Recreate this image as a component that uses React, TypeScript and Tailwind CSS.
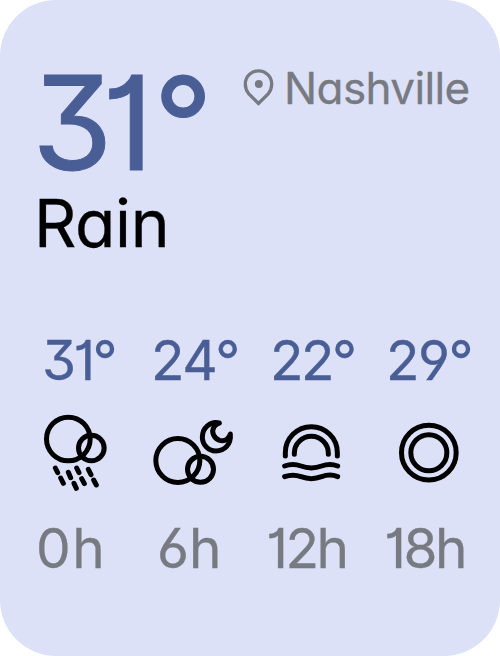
import React from "react";

const face =
  "font-['Inter','Liberation_Sans',sans-serif] font-normal [-webkit-text-stroke:0.3px_currentColor] [font-feature-settings:'cv11','cv09','cv01','cv03','cv04','kern'] whitespace-nowrap leading-none";

function RainIcon() {
  return (
    <svg viewBox="0 0 270 285" className="h-[95px] w-[90px]" fill="none" stroke="black" strokeLinecap="round">
      <g strokeWidth="15">
        <circle cx="100" cy="102" r="65.5" />
        <circle cx="169" cy="129" r="38.5" />
      </g>
      <path
        strokeWidth="15"
        d="M61 189l7 14M100 202l7 16M125 189l7 14M160 193l8 16M77 219l8 16M117 235l7 15M140 221l8 15M176 225l8 15"
      />
    </svg>
  );
}

function CloudyNightIcon() {
  return (
    <svg viewBox="0 0 285 285" className="h-[95px] w-[95px]" fill="none" stroke="black" strokeWidth="15" strokeLinejoin="round">
      <circle cx="98.500" cy="166.500" r="66" />
      <circle cx="166.500" cy="193" r="39" />
      <path d="M223 54C195 48 172 68 172 97A41 41 0 0 0 213 138C238 138 259 118 256 87C250 104 236 109 224 106C206 101 198 80 207 66C211 60 216 56 223 54Z" />
    </svg>
  );
}

function SunsetIcon() {
  return (
    <svg viewBox="0 0 225 240" className="h-[80px] w-[75px]" fill="none" stroke="black" strokeWidth="15" strokeLinecap="round">
      <path d="M31 138V128A78 78 0 0 1 187 128V138" />
      <path d="M58 133V130A51 51 0 0 1 160 130V133" />
      <path d="M29 168C45 162 62 162 78 168C99 176 119 176 140 168C156 162 173 162 188 168" />
      <path d="M29 200C45 194 62 194 78 200C99 208 119 208 140 200C156 194 173 194 188 200" />
    </svg>
  );
}

function SunIcon() {
  return (
    <svg viewBox="0 0 225 240" className="h-[80px] w-[75px]" fill="none" stroke="black" strokeWidth="15">
      <circle cx="116.500" cy="128" r="82" />
      <circle cx="116.500" cy="128" r="54" />
    </svg>
  );
}

function PinIcon() {
  return (
    <svg viewBox="0 0 100 120" className="h-[40px] w-[33px] shrink-0" fill="none" stroke="#777a81" strokeWidth="10">
      <path d="M50 110L20 80C13 71 10 62 10 51A40 40 0 0 1 90 51C90 62 87 71 80 80Z" />
      <circle cx="51" cy="51" r="12" fill="#777a81" stroke="none" />
    </svg>
  );
}

const temps = [
  { text: "31", cls: "ml-[42px] w-[109px] tracking-[-2.8px]" },
  { text: "24", cls: "w-[119px] tracking-[-1.5px]" },
  { text: "22", cls: "w-[116px] tracking-[-2.5px]" },
  { text: "29", cls: "w-[100px] tracking-[-1.5px]" },
];

const hours = [
  { text: "0h", cls: "ml-[36px] w-[121px] tracking-[1.5px]" },
  { text: "6h", cls: "w-[109px]" },
  { text: "12h", cls: "w-[118px] tracking-[-2.5px]" },
  { text: "18h", cls: "w-[100px] tracking-[-2.5px]" },
];

export default function App() {
  return (
    <main className={`flex h-[656px] w-[500px] flex-col overflow-hidden rounded-[56px] bg-[#dde1f8] ${face}`}>
      <header className="flex h-[130px] shrink-0 pl-[32px] text-[#4a5e96]">
        <h1 className="mt-[58px] w-[210px] text-[130px] [-webkit-text-stroke:1px_currentColor]">
          <span className="tracking-[-11px]">3</span>
          <span className="tracking-[0px]">1</span>
          <span>°</span>
        </h1>
        <div className="flex pt-[67px] text-[#777a81]">
          <PinIcon />
          <span className="-mt-px ml-[9px] text-[44px] tracking-[-0.6px]">Nashville</span>
        </div>
      </header>
      <h2 className="mt-[60px] h-[143px] shrink-0 pl-[34px] text-[66px] tracking-[-0.4px] text-black">Rain</h2>
      <div className="flex h-[72px] shrink-0 text-[55px] text-[#4a5e96]">
        {temps.map((t) => (
          <span key={t.text} className={`shrink-0 ${t.cls}`}>{t.text}°</span>
        ))}
      </div>
      <div className="flex h-[116px] shrink-0 items-start pl-[35px]">
        <RainIcon />
        <div className="ml-[20px]"><CloudyNightIcon /></div>
        <div className="ml-[35px] mt-[5px]"><SunsetIcon /></div>
        <div className="ml-[40px] mt-[5px]"><SunIcon /></div>
      </div>
      <div className="flex text-[55px] text-[#777a81]">
        {hours.map((t) => (
          <span key={t.text} className={`shrink-0 ${t.cls}`}>{t.text}</span>
        ))}
      </div>
    </main>
  );
}
